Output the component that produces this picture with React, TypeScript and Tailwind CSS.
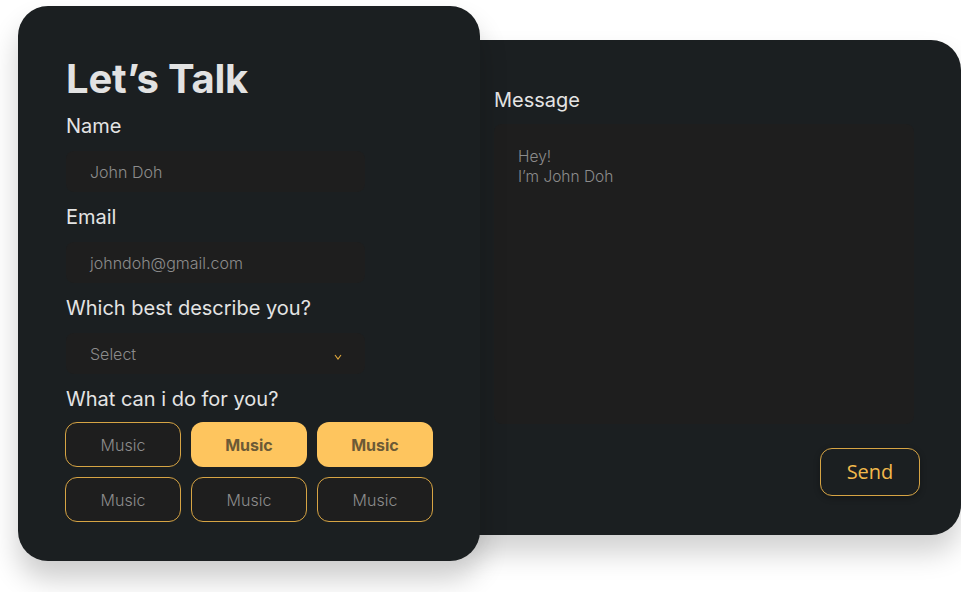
import React from "react";

const Label = ({ children, className = "" }: { children: React.ReactNode; className?: string }) => (
  <div className={`text-[20px] leading-6 font-normal text-[#e4e4e4] ${className}`}>{children}</div>
);

const Field = ({ children, className = "" }: { children: React.ReactNode; className?: string }) => (
  <div
    className={`mt-[13px] h-[41px] w-[299px] rounded-[8px] bg-[#1e1e1e] pl-6 pr-6 flex items-center text-[16px] font-light text-[#8c8c8c] ${className}`}
  >
    {children}
  </div>
);

const Choice = ({ active }: { active?: boolean }) =>
  active ? (
    <div className="h-[45px] rounded-[12px] bg-[#fec55e] flex items-center justify-center text-[16px] font-bold text-[#6c5a36]">
      Music
    </div>
  ) : (
    <div className="h-[45px] rounded-[12px] border border-[#d6a444] bg-[#1e1e1e] flex items-center justify-center text-[16px] font-light text-[#8c8c8c]">
      Music
    </div>
  );

export default function App() {
  return (
    <div
      className="w-[961px] h-[592px] bg-white overflow-hidden flex items-start pl-[18px] pt-[6px]"
      style={{ fontFamily: "Inter, 'Noto Sans', sans-serif" }}
    >
      <div className="relative z-10 w-[462px] h-[555px] shrink-0 rounded-[30px] bg-[#1b1f21] pl-[48px] pt-[49px] shadow-[0_18px_28px_rgba(0,0,0,0.2)] flex flex-col">
        <h1 className="text-[40px] leading-[48px] font-bold text-[#e2e2e2] tracking-[-0.2px]">Let’s Talk</h1>
        <Label className="mt-[11px]">Name</Label>
        <Field>John Doh</Field>
        <Label className="mt-[13px]">Email</Label>
        <Field>johndoh@gmail.com</Field>
        <Label className="mt-[13px]">Which best describe you?</Label>
        <Field className="justify-between">
          <span>Select</span>
          <svg width="8" height="6" viewBox="0 0 8 6" className="mr-[-1px] mt-[6px]">
            <path d="M1 1 L4 5 L7 1" fill="none" stroke="#e0a83c" strokeWidth="1.1" />
          </svg>
        </Field>
        <Label className="mt-[13px]">What can i do for you?</Label>
        <div className="mt-[11px] -ml-px grid grid-cols-[116px_116px_116px] gap-[10px]">
          <Choice />
          <Choice active />
          <Choice active />
          <Choice />
          <Choice />
          <Choice />
        </div>
      </div>
      <div className="mt-[34px] -ml-[30px] w-[511px] h-[495px] shrink-0 rounded-[30px] bg-[#1b1f21] pl-[44px] pt-[48px] shadow-[0_18px_28px_rgba(0,0,0,0.18)] flex flex-col">
        <Label>Message</Label>
        <div className="mt-3 w-[420px] h-[300px] rounded-[8px] bg-[#1e1e1e] pl-6 pt-[23px] text-[15.5px] leading-5 font-light text-[#8c8c8c]">
          <div>Hey!</div>
          <div>I’m John Doh</div>
        </div>
        <div className="mt-6 w-[426px] flex justify-end">
          <div
            className="w-[100px] h-[48px] rounded-[12px] border border-[#d6a444] flex items-center justify-center text-[20px] text-[#f2b94c] shadow-[0_2px_6px_rgba(0,0,0,0.3)]"
            style={{ fontFamily: "'Open Sans', sans-serif" }}
          >
            Send
          </div>
        </div>
      </div>
    </div>
  );
}
